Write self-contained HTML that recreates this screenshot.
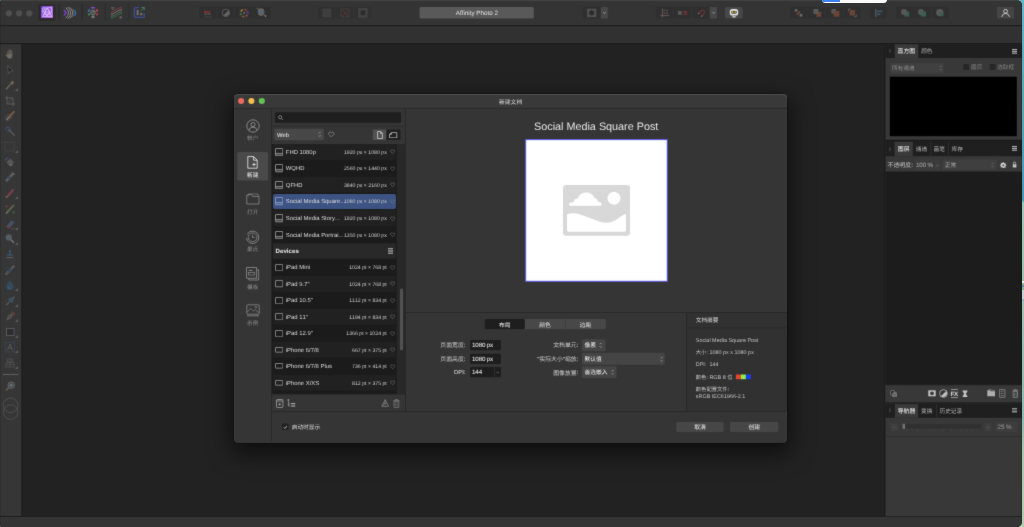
<!DOCTYPE html>
<html><head><meta charset="utf-8"><title>Affinity Photo 2</title>
<style>
html,body{margin:0;padding:0}
body{width:1024px;height:527px;position:relative;overflow:hidden;background:#6db6c0;font-family:"Liberation Sans",sans-serif;text-rendering:geometricPrecision;font-kerning:none}
.t{position:absolute;white-space:pre;display:block;height:0}
#win{position:absolute;left:0;top:0;width:1021.5px;height:527px;border-radius:2px 5.5px 5.5px 2px;overflow:hidden;background:#222}
#inner{position:absolute;left:0;top:0;width:1021.5px;height:527px;background:#222;will-change:transform;filter:url(#soft)}
</style></head><body>
<svg width="0" height="0" style="position:absolute"><defs><filter id="soft" x="0" y="0" width="100%" height="100%" color-interpolation-filters="sRGB"><feConvolveMatrix order="3" kernelMatrix="0.02 0.13 0.02 0.13 1 0.13 0.02 0.13 0.02" divisor="1.6" edgeMode="duplicate" preserveAlpha="true"/></filter></defs></svg>
<div style="position:absolute;left:1018px;top:0;width:6px;height:527px;background:linear-gradient(180deg,#63b7c9 0px,#5ba5b4 110px,#4a9ab8 200px,#9cc8b8 203px,#9cc4b0 281px,#e8f0e8 281.5px,#e8f0e8 282.5px,#8ab890 283px,#8ab890 285px,#5a78d0 286px,#8ab890 287.5px,#8ab890 290px,#c8d2d0 290.5px,#c8d2d0 299px,#9ab0c8 299.5px,#9ab0c8 300.5px,#a0c4b4 301.5px,#8cbcb0 420px,#a8c8b0 450px,#b4ccb0 527px)"></div>
<div id="win"><div id="inner">
<svg style="position:absolute;left:-1px;top:-1px" width="1024" height="28"><rect x="1.00" y="1.00" width="1022.00" height="25.30" fill="#343434"/></svg>
<div style="position:absolute;left:0.00px;top:0.00px;width:1022.00px;height:1.00px;background:#4b4b4b;"></div>
<svg style="position:absolute;left:-1px;top:24px" width="1024" height="4"><rect x="1.00" y="1.00" width="1022.00" height="1.20" fill="#1e1e1e"/></svg>
<svg style="position:absolute;left:-1px;top:25px" width="1024" height="20"><rect x="1.00" y="1.20" width="1022.00" height="17.00" fill="#313131"/></svg>
<svg style="position:absolute;left:-1px;top:42px" width="1024" height="4"><rect x="1.00" y="1.00" width="1022.00" height="1.20" fill="#1b1b1b"/></svg>
<svg style="position:absolute;left:-1px;top:43px" width="1024" height="476"><rect x="1.00" y="1.20" width="1022.00" height="473.00" fill="#222222"/></svg>
<svg style="position:absolute;left:-1px;top:43px" width="24" height="476"><rect x="1.00" y="1.20" width="21.50" height="473.00" fill="#363636"/></svg>
<svg style="position:absolute;left:20px;top:43px" width="4" height="476"><rect x="1.50" y="1.20" width="1.00" height="473.00" fill="#1c1c1c"/></svg>
<svg style="position:absolute;left:-1px;top:515px" width="1024" height="14"><rect x="1.00" y="1.50" width="1022.00" height="11.00" fill="#343434"/></svg>
<div style="position:absolute;left:0.00px;top:516.00px;width:1022.00px;height:1.00px;background:#1e1e1e;"></div>
<svg style="position:absolute;left:883px;top:43px" width="140" height="475"><rect x="1.00" y="1.20" width="138.00" height="472.00" fill="#383838"/></svg>
<svg style="position:absolute;left:883px;top:43px" width="4" height="475"><rect x="1.00" y="1.20" width="1.40" height="472.00" fill="#1b1b1b"/></svg>
<svg style="position:absolute;left:4px;top:9px" width="9" height="9"><rect x="1.80" y="1.20" width="6.20" height="6.20" rx="3.10" fill="#4f4f4f"/></svg>
<svg style="position:absolute;left:15px;top:9px" width="9" height="9"><rect x="1.00" y="1.20" width="6.20" height="6.20" rx="3.10" fill="#4f4f4f"/></svg>
<svg style="position:absolute;left:25px;top:9px" width="9" height="9"><rect x="1.20" y="1.20" width="6.20" height="6.20" rx="3.10" fill="#4f4f4f"/></svg>
<svg style="position:absolute;left:37px;top:3px" width="20" height="19"><rect x="1.30" y="1.30" width="17.00" height="16.40" rx="1.50" fill="#2a2a2a"/></svg>
<svg style="position:absolute;left:40.70px;top:6.30px;" width="12.4" height="12" viewBox="0 0 12.4 12"><defs><linearGradient id="pp" x1="0" y1="0" x2="1" y2="1"><stop offset="0" stop-color="#6a46dc"/><stop offset=".55" stop-color="#a05ce4"/><stop offset="1" stop-color="#c874ea"/></linearGradient></defs>
<rect width="12.4" height="12" rx=".8" fill="url(#pp)"/>
<g stroke="#efe0ff" stroke-width=".8" fill="none" opacity=".8"><path d="M1.6 10.4 L6.2 1.6 L10.8 10.4 Z"/><path d="M3.9 6 H8.5 M2.8 8.2 H9.6 M6.2 1.6 L3.9 6 L6.2 10.4 L8.5 6 Z M3.9 6 L2.8 8.2 M8.5 6 L9.6 8.2"/><path d="M7.4 1.6 L10.6 1.6 L10.6 7 M1.8 1.8 L4.4 1.8 L1.8 6.4Z"/></g></svg>
<svg style="position:absolute;left:57px;top:2px" width="4" height="20"><rect x="1.40" y="1.50" width="1.00" height="17.00" fill="#2a2a2a"/></svg>
<svg style="position:absolute;left:80px;top:2px" width="4" height="20"><rect x="1.60" y="1.50" width="1.00" height="17.00" fill="#2a2a2a"/></svg>
<svg style="position:absolute;left:103px;top:2px" width="4" height="20"><rect x="1.80" y="1.50" width="1.00" height="17.00" fill="#2a2a2a"/></svg>
<svg style="position:absolute;left:127px;top:2px" width="4" height="20"><rect x="1.50" y="1.50" width="1.00" height="17.00" fill="#2a2a2a"/></svg>
<svg style="position:absolute;left:63.20px;top:5.60px;" width="14" height="14" viewBox="0 0 14 14"><g fill="none" stroke-linecap="round"><path d="M1.4 4.6 L3.2 6.8 L1.4 9" stroke="#7a40c4" stroke-width="1.6"/>
<path d="M3 1.8 Q8.4 6.8 3 11.8" stroke="#8e8e8e" stroke-width=".95"/><path d="M5 1.2 Q10.6 6.8 5 12.4" stroke="#8e8e8e" stroke-width=".95"/><path d="M7.2 1.6 Q12.4 6.8 7.2 12" stroke="#8a8a8a" stroke-width=".95"/><path d="M9.6 3 Q12.8 6.8 9.6 10.6" stroke="#6c6c6c" stroke-width=".8"/>
<path d="M11.9 4.2 Q13.3 6.8 11.9 9.4" stroke="#3b74b0" stroke-width="1.1"/></g></svg>
<svg style="position:absolute;left:86.40px;top:5.60px;" width="14" height="14" viewBox="0 0 14 14"><g fill="none" stroke-width="1.7"><path d="M2.5 6 A4.6 4.6 0 0 1 3.7 3.3" stroke="#3a70ac"/><path d="M5.1 2.1 A4.6 4.6 0 0 1 8.9 2.1" stroke="#8c48c0"/><path d="M10.3 3.3 A4.6 4.6 0 0 1 11.5 5.9" stroke="#b44460"/><path d="M11.5 7.4 A4.6 4.6 0 0 1 10.5 9.4" stroke="#ac4444"/><path d="M2.5 7.4 A4.6 4.6 0 0 0 3.5 9.4" stroke="#38905e"/></g>
<circle cx="7" cy="6.5" r="2.4" fill="#4a4a4a" stroke="#7a7a7a" stroke-width=".9"/><path d="M7 6.5 L8.1 5.2" stroke="#aaa" stroke-width=".8"/><rect x="5.6" y="9.7" width="2.8" height="2.4" fill="#7a7a7a"/></svg>
<svg style="position:absolute;left:110.00px;top:6.00px;" width="13" height="13" viewBox="0 0 13 13"><g fill="none" stroke-width=".9"><path d="M1 6.2 C4 6.2 5 1.8 12 1.6" stroke="#8a3c3c"/><path d="M1 8.3 C4 8.3 6 4 12 3.8" stroke="#808080"/><path d="M1 10.4 C4 10.4 6 6.2 12 6" stroke="#808080" opacity=".7"/><path d="M1 12.2 C5 12.2 7 8 12 7.6" stroke="#2f7444"/></g><rect x="1.2" y="1.4" width="3.2" height="1" fill="#6e6e6e"/><rect x="1.8" y="3.2" width="2" height=".8" fill="#606060"/><rect x="9.4" y="10.2" width="2.6" height="2.4" fill="#5a5a5a"/></svg>
<svg style="position:absolute;left:133.00px;top:6.00px;" width="13" height="13" viewBox="0 0 13 13"><path d="M6 1.6 H2.6 Q1.4 1.6 1.4 2.8 V10.2 Q1.4 11.4 2.6 11.4 H10 Q11.2 11.4 11.2 10.2 V7" fill="none" stroke="#414a94" stroke-width="1.4"/><rect x="3.6" y="3.8" width="2" height="5.4" fill="#707070"/><rect x="7" y="7" width="2.4" height="2.2" fill="#707070"/><path d="M7.6 5 L11.2 1.6 M8.6 1.5 H11.3 V4.2" fill="none" stroke="#347e64" stroke-width="1"/></svg>
<svg style="position:absolute;left:198px;top:5px" width="20" height="15"><rect x="1.30" y="1.90" width="17.00" height="11.70" rx="1.20" fill="#2f2f2f"/></svg>
<svg style="position:absolute;left:216px;top:5px" width="20" height="15"><rect x="1.30" y="1.90" width="17.00" height="11.70" rx="1.20" fill="#2f2f2f"/></svg>
<svg style="position:absolute;left:234px;top:5px" width="20" height="15"><rect x="1.20" y="1.90" width="17.00" height="11.70" rx="1.20" fill="#2f2f2f"/></svg>
<svg style="position:absolute;left:252px;top:5px" width="20" height="15"><rect x="1.30" y="1.90" width="17.00" height="11.70" rx="1.20" fill="#2f2f2f"/></svg>
<svg style="position:absolute;left:203.30px;top:7.80px;opacity:.6;" width="10" height="10" viewBox="0 0 10 10"><path d="M0.8 5.4 L1.4 1.2 L2.6 3.6 L4 2.6 L5.2 3.8 L6.6 2.4 L8 5.4 Z" fill="#a43434"/><path d="M0.8 6.8 L2.6 5.6 L4.4 6.4 L6.4 5.4 L8.2 6.8 Z" fill="#6aa89c" opacity=".75"/><path d="M0.8 9 H8.8" stroke="#5c5c5c" stroke-width="1.1" stroke-dasharray="1.2 .5"/></svg>
<svg style="position:absolute;left:221.00px;top:8.00px;" width="10" height="10" viewBox="0 0 10 10"><circle cx="4.9" cy="4.8" r="3.7" fill="none" stroke="#5c5c5c" stroke-width=".9"/><path d="M2.3 7.4 A3.7 3.7 0 0 0 7.5 2.2 Z" fill="#636363"/></svg>
<svg style="position:absolute;left:238.60px;top:7.60px;opacity:.52;" width="10.4" height="10.4" viewBox="0 0 10.4 10.4"><g stroke-width="2" fill="none"><path d="M5.2 1.4 A3.6 3.6 0 0 1 7.7 2.5" stroke="#c04a4a"/><path d="M8.2 3.3 A3.6 3.6 0 0 1 8.7 5.6" stroke="#8a55c8"/><path d="M8.5 6.6 A3.6 3.6 0 0 1 6.6 8.4" stroke="#c05a8a"/><path d="M5.5 8.8 A3.6 3.6 0 0 1 3 8" stroke="#c87838"/><path d="M2.3 7.2 A3.6 3.6 0 0 1 1.6 5" stroke="#4a9a58"/><path d="M1.8 3.9 A3.6 3.6 0 0 1 4 1.6" stroke="#c8a838"/></g><circle cx="5.2" cy="5.1" r="1" fill="#aaa"/></svg>
<svg style="position:absolute;left:256.40px;top:7.40px;opacity:.58;" width="12" height="11" viewBox="0 0 12 11"><circle cx="5" cy="5" r="3.4" fill="#6a8ab0"/><path d="M2.4 3.2 A3.4 3.4 0 0 1 7.6 3.2" fill="none" stroke="#d08a48" stroke-width="1.2" opacity=".8"/><path d="M2.6 7 A3.4 3.4 0 0 0 7 7.6" fill="none" stroke="#d08a48" stroke-width="1.2" opacity=".8"/><path d="M1 1 L9.8 9.6" stroke="#999" stroke-width="1.3" stroke-dasharray="1 .6"/><path d="M8.4 8 L10.6 8.6 L9.6 10.6 Z" fill="#aaa"/></svg>
<svg style="position:absolute;left:317px;top:5px" width="19" height="15"><rect x="1.00" y="1.90" width="17.00" height="11.70" rx="1.20" fill="#303030"/></svg>
<svg style="position:absolute;left:334px;top:5px" width="20" height="15"><rect x="1.90" y="1.90" width="17.00" height="11.70" rx="1.20" fill="#303030"/></svg>
<svg style="position:absolute;left:353px;top:5px" width="20" height="15"><rect x="1.40" y="1.90" width="17.00" height="11.70" rx="1.20" fill="#303030"/></svg>
<svg style="position:absolute;left:321.60px;top:7.90px;" width="10" height="10" viewBox="0 0 10 10"><rect x=".9" y=".9" width="8" height="8" fill="#3e3e3e" stroke="#4c4c4c" stroke-width=".8" stroke-dasharray="1 .9"/></svg>
<svg style="position:absolute;left:339.60px;top:7.90px;" width="10" height="10" viewBox="0 0 10 10"><rect x=".9" y=".9" width="8" height="8" fill="none" stroke="#555" stroke-width=".8" stroke-dasharray="1 .9"/><path d="M1.8 1.8 L8 8 M8 1.8 L1.8 8" stroke="#6e2e32" stroke-width=".9"/></svg>
<svg style="position:absolute;left:358.00px;top:7.90px;" width="10" height="10" viewBox="0 0 10 10"><rect x=".4" y=".4" width="9" height="9" fill="#424242" stroke="#4c4c4c" stroke-width=".8" stroke-dasharray="1 .9"/><rect x="2.6" y="2.6" width="4.6" height="4.6" rx="1" fill="#2c2c2c"/></svg>
<svg style="position:absolute;left:418px;top:6px" width="117" height="14"><rect x="1.50" y="1.00" width="114.30" height="11.50" rx="1.50" fill="#595959"/></svg>
<span class="t" style="left:455.71px;top:10px;line-height:8px;font-size:6.30px;color:#dcdcdc;-webkit-text-stroke:0.05px;">Affinity Photo 2</span>
<svg style="position:absolute;left:582px;top:5px" width="19" height="15"><rect x="1.20" y="1.90" width="16.60" height="11.70" rx="1.20" fill="#2f2f2f"/></svg>
<svg style="position:absolute;left:586px;top:7px" width="12" height="12"><rect x="1.10" y="1.70" width="9.20" height="8.40" fill="#525252"/></svg>
<svg style="position:absolute;left:588px;top:9px" width="8" height="8"><rect x="1.00" y="1.20" width="5.20" height="5.20" rx="2.60" fill="#2b2b2b"/></svg>
<svg style="position:absolute;left:600px;top:5px" width="9" height="15"><rect x="1.00" y="1.90" width="6.90" height="11.70" rx="1.20" fill="#484848"/></svg>
<svg style="position:absolute;left:601.00px;top:6.90px;" width="6.9" height="11.7" viewBox="0 0 6.9 11.7"><path d="M2.2 5.2 L3.45 6.5 L4.7 5.2" fill="none" stroke="#b4b4b4" stroke-width=".75"/></svg>
<svg style="position:absolute;left:654px;top:5px" width="20" height="15"><rect x="1.90" y="1.90" width="17.00" height="11.70" rx="1.20" fill="#2f2f2f"/></svg>
<svg style="position:absolute;left:672px;top:5px" width="20" height="15"><rect x="1.90" y="1.90" width="17.00" height="11.70" rx="1.20" fill="#2f2f2f"/></svg>
<svg style="position:absolute;left:691px;top:5px" width="19" height="15"><rect x="1.00" y="1.90" width="17.00" height="11.70" rx="1.20" fill="#2f2f2f"/></svg>
<svg style="position:absolute;left:659.80px;top:7.60px;" width="10" height="10" viewBox="0 0 10 10"><path d="M2.4 .6 V9.6 M.4 7.6 H9" stroke="#6e6e6e" stroke-width=".7"/><rect x="3.6" y="1.6" width="1.6" height="1.6" fill="#555"/><rect x="6.2" y="1.6" width="1.6" height="1.6" fill="#555"/><rect x="3.6" y="4.4" width="1.8" height="1.8" fill="#8a3034"/><rect x="6.2" y="4.4" width="1.6" height="1.6" fill="#555"/></svg>
<svg style="position:absolute;left:677.00px;top:8.00px;" width="12" height="10" viewBox="0 0 12 10"><rect x="1" y="3" width="3.8" height="3.8" fill="#585858"/><path d="M5.8 3 H9.8 V6.8 H5.8 V5.8 H8 V4 H5.8 Z" fill="#7c3034"/></svg>
<svg style="position:absolute;left:695.00px;top:7.00px;" width="12" height="12" viewBox="0 0 12 12"><path d="M3.8 6.4 L6 4 A2 2 0 0 1 8.9 6.8 L6.8 9.1" fill="none" stroke="#7c3034" stroke-width="1.1"/><path d="M3.2 7 L4.1 6" stroke="#777" stroke-width="1.2"/><path d="M6.2 9.7 L7.1 8.7" stroke="#777" stroke-width="1.2"/></svg>
<svg style="position:absolute;left:708px;top:5px" width="10" height="15"><rect x="1.80" y="1.90" width="7.20" height="11.70" rx="1.20" fill="#484848"/></svg>
<svg style="position:absolute;left:709.80px;top:6.90px;" width="7.2" height="11.7" viewBox="0 0 7.2 11.7"><path d="M2.3 5.2 L3.6 6.5 L4.9 5.2" fill="none" stroke="#b4b4b4" stroke-width=".75"/></svg>
<svg style="position:absolute;left:724px;top:5px" width="20" height="15"><rect x="1.00" y="1.90" width="17.60" height="11.70" rx="1.50" fill="#474747"/></svg>
<svg style="position:absolute;left:728.80px;top:7.60px;" width="10" height="10.4" viewBox="0 0 10 10.4"><rect x=".8" y="1" width="8.4" height="6.6" rx="2.6" fill="#e8e8e8"/><rect x="2.3" y="2.7" width="5.4" height="3" rx=".8" fill="#3a3a3a"/><rect x="3" y="3.3" width="1.3" height="1.6" fill="#e6c53a"/><rect x="5.6" y="3.3" width="1.3" height="1.6" fill="#e6c53a"/><path d="M3 8.2 H7 L6.4 9.4 H3.6 Z" fill="#ddd"/></svg>
<svg style="position:absolute;left:789px;top:5px" width="20" height="15"><rect x="1.30" y="1.90" width="17.00" height="11.70" rx="1.20" fill="#2f2f2f"/></svg>
<svg style="position:absolute;left:807px;top:5px" width="20" height="15"><rect x="1.10" y="1.90" width="17.00" height="11.70" rx="1.20" fill="#2f2f2f"/></svg>
<svg style="position:absolute;left:825px;top:5px" width="20" height="15"><rect x="1.10" y="1.90" width="17.00" height="11.70" rx="1.20" fill="#2f2f2f"/></svg>
<svg style="position:absolute;left:843px;top:5px" width="19" height="15"><rect x="1.00" y="1.90" width="17.00" height="11.70" rx="1.20" fill="#2f2f2f"/></svg>
<svg style="position:absolute;left:794.00px;top:7.60px;" width="10" height="10" viewBox="0 0 10 10"><rect x=".8" y="1" width="2.6" height="2.6" fill="#666"/><rect x="5.6" y="5.8" width="2.8" height="2.8" fill="#666"/><path d="M2.2 6 L5.2 2.6 L6.6 4 L3.6 7.4 Z" fill="#6c4338"/></svg>
<svg style="position:absolute;left:811.50px;top:7.60px;" width="11" height="10" viewBox="0 0 11 10"><rect x="4.4" y="3.8" width="4.8" height="5" fill="#6c4338"/><rect x="1.4" y="1" width="5" height="5" fill="#585858"/></svg>
<svg style="position:absolute;left:829.50px;top:7.60px;" width="11" height="10" viewBox="0 0 11 10"><rect x="1.4" y="1" width="4.6" height="4.6" fill="#585858"/><rect x="3.6" y="3" width="5.8" height="5.8" fill="#6c4338"/></svg>
<svg style="position:absolute;left:847.20px;top:7.60px;" width="11" height="10" viewBox="0 0 11 10"><path d="M1.4 3.4 V1 H3.8" fill="none" stroke="#666" stroke-width=".8"/><path d="M9.2 6.4 V8.8 H6.8" fill="none" stroke="#666" stroke-width=".8"/><rect x="2.6" y="2" width="5.4" height="5.4" rx=".5" fill="#6c4338"/></svg>
<svg style="position:absolute;left:869px;top:5px" width="19" height="15"><rect x="1.00" y="1.90" width="17.00" height="11.70" rx="1.20" fill="#2f2f2f"/></svg>
<svg style="position:absolute;left:873.50px;top:7.60px;" width="10" height="10" viewBox="0 0 10 10"><path d="M1.8 .8 V9" stroke="#777" stroke-width=".7"/><rect x="2.6" y="2.4" width="5.8" height="1.8" fill="#3a566e"/><rect x="2.6" y="5.4" width="3.8" height="1.8" fill="#3a566e"/></svg>
<svg style="position:absolute;left:895px;top:5px" width="19" height="15"><rect x="1.10" y="1.90" width="16.80" height="11.70" rx="1.20" fill="#2f2f2f"/></svg>
<svg style="position:absolute;left:912px;top:5px" width="20" height="15"><rect x="1.90" y="1.90" width="16.80" height="11.70" rx="1.20" fill="#2f2f2f"/></svg>
<svg style="position:absolute;left:931px;top:5px" width="19" height="15"><rect x="1.00" y="1.90" width="16.80" height="11.70" rx="1.20" fill="#2f2f2f"/></svg>
<svg style="position:absolute;left:899.50px;top:7.60px;" width="11" height="10" viewBox="0 0 11 10"><rect x="4.4" y="3.6" width="4.8" height="5" fill="#3a5e50"/><circle cx="4" cy="4" r="3" fill="#585858"/></svg>
<svg style="position:absolute;left:917.30px;top:7.60px;" width="11" height="10" viewBox="0 0 11 10"><circle cx="4" cy="4" r="3" fill="#585858"/><rect x="3.8" y="3.4" width="5.2" height="5.2" fill="#3a5e50"/></svg>
<svg style="position:absolute;left:935.40px;top:7.60px;" width="11" height="10" viewBox="0 0 11 10"><circle cx="4.8" cy="4.6" r="3.7" fill="#585858"/><rect x="4.8" y="4.8" width="3.6" height="3.4" fill="#3a5e50"/></svg>
<svg style="position:absolute;left:996px;top:6px" width="19" height="14"><rect x="1.00" y="1.00" width="17.00" height="11.60" rx="1.20" fill="#454545"/></svg>
<svg style="position:absolute;left:1001.00px;top:7.80px;" width="9" height="10" viewBox="0 0 9 10"><circle cx="4.6" cy="3.3" r="1.9" fill="none" stroke="#e4e4e4" stroke-width=".8"/><path d="M.7 8.9 Q1.6 5.4 4.6 5.3 Q7.6 5.4 8.5 8.9" fill="none" stroke="#e4e4e4" stroke-width=".8"/></svg>
<svg style="position:absolute;left:4.20px;top:48.40px;opacity:0.7;" width="12" height="12" viewBox="0 0 12 12"><path d="M3.3 7 V3.6 Q3.3 2.9 3.9 2.9 Q4.5 2.9 4.5 3.6 V6 V2.4 Q4.5 1.7 5.15 1.7 Q5.8 1.7 5.8 2.4 V6 V2 Q5.8 1.3 6.45 1.3 Q7.1 1.3 7.1 2 V6 V3 Q7.1 2.4 7.75 2.4 Q8.4 2.4 8.4 3 V7.8 Q8.4 10.9 5.9 10.9 Q4.2 10.9 3 9.2 L1.7 7 Q1.4 6.3 2 6 Q2.7 5.8 3.3 7Z" fill="#8a8074" stroke="#363636" stroke-width=".25"/></svg>
<svg style="position:absolute;left:4.20px;top:63.60px;opacity:0.75;" width="12" height="12" viewBox="0 0 12 12"><path d="M3.6 1.4 L9.2 7.2 L6.2 7.2 L4.4 9.8 Z" fill="#1e1e1e" stroke="#6a6a6a" stroke-width=".7"/></svg>
<svg style="position:absolute;left:4.20px;top:78.80px;opacity:0.7;" width="12" height="12" viewBox="0 0 12 12"><path d="M2 10.4 L6.4 5.4" stroke="#8a8a7a" stroke-width="1.2"/><path d="M6 4.2 L8 6.2 L9.6 4.6 Q10.6 3.2 9.4 2.2 Q8.2 1.4 7.4 2.6 Z" fill="#8a7a60"/></svg>
<svg style="position:absolute;left:14.60px;top:88.00px;" width="3" height="3" viewBox="0 0 3 3"><path d="M3 0 V3 H0 Z" fill="#5c5c5c"/></svg>
<svg style="position:absolute;left:4.20px;top:94.50px;opacity:0.6;" width="12" height="12" viewBox="0 0 12 12"><path d="M3 .8 V9 H11.2 M.8 3 H9 V11.2" fill="none" stroke="#808080" stroke-width=".8"/><path d="M3 9 L9 3" stroke="#707070" stroke-width=".7"/></svg>
<svg style="position:absolute;left:4.20px;top:109.90px;opacity:0.7;" width="12" height="12" viewBox="0 0 12 12"><path d="M4.6 7.6 L9.8 1.8" stroke="#a06a44" stroke-width="1.8" stroke-linecap="round"/><ellipse cx="4.4" cy="7.6" rx="3.2" ry="2.4" fill="none" stroke="#888" stroke-width=".7" stroke-dasharray="1 .7" transform="rotate(-40 4.4 7.6)"/><path d="M2.6 9.8 L5 7.2" stroke="#999" stroke-width="1.4"/></svg>
<svg style="position:absolute;left:4.20px;top:125.10px;opacity:0.7;" width="12" height="12" viewBox="0 0 12 12"><path d="M4.4 4.4 L10.6 10.6" stroke="#777" stroke-width="1.2"/><path d="M3.8 1 V3 M3.8 5.4 V7.2 M.8 4 H2.8 M5 4 H7 M1.8 2 L2.8 3 M5.8 2 L4.8 3" stroke="#4a5ab0" stroke-width=".9"/></svg>
<svg style="position:absolute;left:4.20px;top:141.00px;opacity:0.5;" width="12" height="12" viewBox="0 0 12 12"><rect x="1" y="1.2" width="9.2" height="8.8" fill="none" stroke="#6a6a6a" stroke-width=".8" stroke-dasharray="1.2 1"/></svg>
<svg style="position:absolute;left:14.60px;top:150.20px;" width="3" height="3" viewBox="0 0 3 3"><path d="M3 0 V3 H0 Z" fill="#5c5c5c"/></svg>
<svg style="position:absolute;left:4.20px;top:156.20px;opacity:0.5;" width="12" height="12" viewBox="0 0 12 12"><path d="M2.4 6.4 L6.2 2.4 L10 6.2 L6.4 10 Z" fill="#777"/><path d="M2 5.4 Q1.2 2.6 4.4 1.6" fill="none" stroke="#3e6ea8" stroke-width="1.2"/><path d="M4 8.2 H9.4 L6.8 10.6Z" fill="#999"/></svg>
<svg style="position:absolute;left:4.20px;top:171.40px;opacity:0.5;" width="12" height="12" viewBox="0 0 12 12"><path d="M2 10.2 L9.6 2.2" stroke="#8a8a7a" stroke-width="2.6"/><path d="M4.2 8 L6.4 5.6" stroke="#3e5a9a" stroke-width="2.6"/><path d="M8.2 1.4 L10.8 3.6" stroke="#999" stroke-width="1"/></svg>
<svg style="position:absolute;left:4.20px;top:187.20px;opacity:0.6;" width="12" height="12" viewBox="0 0 12 12"><path d="M2.4 10 Q3.6 9.8 4.4 8.4" stroke="#a0705a" stroke-width="1.8" stroke-linecap="round" fill="none"/><path d="M5 7.6 L8.8 3.2" stroke="#a04450" stroke-width="2.4" stroke-linecap="round"/></svg>
<svg style="position:absolute;left:14.60px;top:196.40px;" width="3" height="3" viewBox="0 0 3 3"><path d="M3 0 V3 H0 Z" fill="#5c5c5c"/></svg>
<svg style="position:absolute;left:4.20px;top:202.50px;opacity:0.5;" width="12" height="12" viewBox="0 0 12 12"><path d="M3 9.6 L9.4 2.6" stroke="#7a8a5a" stroke-width="2.2" stroke-linecap="round"/><circle cx="2.6" cy="3.4" r="1.1" fill="#b04040"/><circle cx="9.6" cy="9.4" r="1.1" fill="#3a9a5a"/><path d="M2 10.6 L3.6 8.8" stroke="#aaa" stroke-width="1.2"/></svg>
<svg style="position:absolute;left:4.20px;top:218.00px;opacity:0.5;" width="12" height="12" viewBox="0 0 12 12"><path d="M3.4 7 L7.6 2.2 L10.4 4.6 L6.2 9.4 Z" fill="#5a6a9a"/><path d="M3.4 7 L6.2 9.4 L4.8 10.8 L2 8.6Z" fill="#a05050"/><path d="M7 10.8 H10.6" stroke="#777" stroke-width=".8"/></svg>
<svg style="position:absolute;left:14.60px;top:227.20px;" width="3" height="3" viewBox="0 0 3 3"><path d="M3 0 V3 H0 Z" fill="#5c5c5c"/></svg>
<svg style="position:absolute;left:4.20px;top:233.20px;opacity:0.6;" width="12" height="12" viewBox="0 0 12 12"><circle cx="4.8" cy="4.4" r="3.1" fill="#6a7886"/><path d="M6.8 6.6 L10 9.8" stroke="#8a949e" stroke-width="1.7"/></svg>
<svg style="position:absolute;left:14.60px;top:242.40px;" width="3" height="3" viewBox="0 0 3 3"><path d="M3 0 V3 H0 Z" fill="#5c5c5c"/></svg>
<svg style="position:absolute;left:4.20px;top:248.40px;opacity:0.55;" width="12" height="12" viewBox="0 0 12 12"><path d="M5 2 H7 V3.6 L6.6 6.2 H8.8 V7.8 H3.2 V6.2 H5.4 L5 3.6Z" fill="#3e6a9a"/><path d="M2.6 9.6 H9.4" stroke="#7a8896" stroke-width="1"/></svg>
<svg style="position:absolute;left:4.20px;top:263.60px;opacity:0.5;" width="12" height="12" viewBox="0 0 12 12"><path d="M2.4 9.8 L9.6 2.4" stroke="#777" stroke-width="2.6" stroke-linecap="round"/><path d="M4.6 7.6 L7.4 4.6" stroke="#3a5a8a" stroke-width="2.6"/><path d="M1.6 5.4 A2.6 2.6 0 0 1 5 3 M2.2 8 A2.6 2.6 0 0 0 5 8.6" fill="none" stroke="#3a5a8a" stroke-width=".7"/></svg>
<svg style="position:absolute;left:4.20px;top:278.80px;opacity:0.5;" width="12" height="12" viewBox="0 0 12 12"><path d="M6 1.2 Q9.6 5.6 9.6 7.6 A3.6 3.6 0 0 1 2.4 7.6 Q2.4 5.6 6 1.2Z" fill="#2e5f86"/><path d="M4 7.6 A2 2 0 0 0 6 9.6" stroke="#6a9ac0" stroke-width=".7" fill="none"/></svg>
<svg style="position:absolute;left:14.60px;top:288.00px;" width="3" height="3" viewBox="0 0 3 3"><path d="M3 0 V3 H0 Z" fill="#5c5c5c"/></svg>
<svg style="position:absolute;left:4.20px;top:294.50px;opacity:0.45;" width="12" height="12" viewBox="0 0 12 12"><path d="M2 10.4 L5 7.4" stroke="#8a8a7a" stroke-width="1.2"/><circle cx="7" cy="5" r="2.6" fill="#3f6f9a"/><path d="M8.6 3.4 L10.4 1.6" stroke="#999" stroke-width="1.3"/><path d="M1.4 6.4 L2.4 7.4 M2 4.4 L2.6 5" stroke="#a05a3a" stroke-width=".9"/></svg>
<svg style="position:absolute;left:14.60px;top:303.70px;" width="3" height="3" viewBox="0 0 3 3"><path d="M3 0 V3 H0 Z" fill="#5c5c5c"/></svg>
<svg style="position:absolute;left:4.20px;top:309.90px;opacity:0.5;" width="12" height="12" viewBox="0 0 12 12"><path d="M2 10.4 L4.2 5.2 L7.6 3.4 L9 4.8 L7.2 8.2 Z" fill="#777"/><path d="M7.6 1.8 L10.6 4.8" stroke="#a04a3a" stroke-width="1.8"/><circle cx="5.6" cy="6.8" r=".8" fill="#333"/></svg>
<svg style="position:absolute;left:14.60px;top:319.10px;" width="3" height="3" viewBox="0 0 3 3"><path d="M3 0 V3 H0 Z" fill="#5c5c5c"/></svg>
<svg style="position:absolute;left:4.20px;top:325.60px;opacity:0.42;" width="12" height="12" viewBox="0 0 12 12"><rect x="2.4" y="2.6" width="7.6" height="7" fill="#1c2424" stroke="#9a9a9a" stroke-width=".8"/></svg>
<svg style="position:absolute;left:14.60px;top:334.80px;" width="3" height="3" viewBox="0 0 3 3"><path d="M3 0 V3 H0 Z" fill="#5c5c5c"/></svg>
<svg style="position:absolute;left:4.20px;top:341.00px;opacity:0.42;" width="12" height="12" viewBox="0 0 12 12"><rect x="1.4" y="1.4" width="9.2" height="9.4" fill="none" stroke="#3a5a8a" stroke-width=".8"/><path d="M3.6 9 L6 3 L8.4 9 M4.4 7.2 H7.6" fill="none" stroke="#8a8a8a" stroke-width=".9"/></svg>
<svg style="position:absolute;left:14.60px;top:350.20px;" width="3" height="3" viewBox="0 0 3 3"><path d="M3 0 V3 H0 Z" fill="#5c5c5c"/></svg>
<svg style="position:absolute;left:4.20px;top:357.20px;opacity:0.42;" width="12" height="12" viewBox="0 0 12 12"><path d="M3.6 2 H8.4 L9 5 H3 Z M2.4 5.4 H9.6 L10.4 10 H1.6 Z" fill="none" stroke="#777" stroke-width=".8"/><path d="M6 2 V10 M2 7.6 H10" stroke="#777" stroke-width=".7"/></svg>
<svg style="position:absolute;left:14.60px;top:366.40px;" width="3" height="3" viewBox="0 0 3 3"><path d="M3 0 V3 H0 Z" fill="#5c5c5c"/></svg>
<svg style="position:absolute;left:2px;top:373px" width="18" height="3"><rect x="1.00" y="1.00" width="15.50" height="0.80" fill="#6a6a6a"/></svg>
<svg style="position:absolute;left:4.40px;top:379.80px;opacity:.75;" width="12.6" height="12.6" viewBox="0 0 12.6 12.6"><circle cx="7.2" cy="5.2" r="3.2" fill="#4a4a4a" stroke="#7a7a7a" stroke-width=".9"/><circle cx="7.2" cy="5.2" r="1.6" fill="#6e8296"/><path d="M4.8 7.6 L1.8 10.6" stroke="#7a6a5a" stroke-width="1.5"/></svg>
<svg style="position:absolute;left:2.00px;top:396.00px;" width="18" height="26" viewBox="0 0 18 26"><circle cx="8.6" cy="9.3" r="7.3" fill="none" stroke="#585858" stroke-width=".7"/><circle cx="8.6" cy="16.1" r="7.3" fill="none" stroke="#585858" stroke-width=".7"/></svg>
<svg style="position:absolute;left:884px;top:43px" width="139" height="16"><rect x="1.40" y="1.20" width="136.60" height="13.80" fill="#1f1f1f"/></svg>
<svg style="position:absolute;left:888.80px;top:49.10px;" width="2" height="4.4" viewBox="0 0 2 4.4"><path d="M1 .2 V4.2" stroke="#4e4e4e" stroke-width="1"/></svg>
<svg style="position:absolute;left:893px;top:43px" width="27" height="16"><rect x="1.70" y="1.20" width="23.50" height="13.80" fill="#3a3a3a"/></svg>


<svg style="position:absolute;left:1012.20px;top:48.90px;" width="5" height="5" viewBox="0 0 5 5"><path d="M0 .6 H5 M0 2.4 H5 M0 4.2 H5" stroke="#d8d8d8" stroke-width=".9"/></svg>
<svg style="position:absolute;left:889px;top:62px" width="56" height="13"><rect x="1.20" y="1.20" width="53.50" height="10.00" rx="1.20" fill="#404040"/></svg>

<svg style="position:absolute;left:938.80px;top:65.20px;" width="3.4" height="6" viewBox="0 0 3.4 6"><path d="M.5 2.2 L1.7 .9 L2.9 2.2 M.5 3.8 L1.7 5.1 L2.9 3.8" fill="none" stroke="#777" stroke-width=".6"/></svg>
<svg style="position:absolute;left:962px;top:62px" width="9" height="9"><rect x="1.30" y="1.90" width="5.80" height="6.10" rx="1.20" fill="#262626"/></svg>

<svg style="position:absolute;left:988px;top:62px" width="9" height="9"><rect x="1.60" y="1.90" width="5.80" height="6.10" rx="1.20" fill="#262626"/></svg>

<svg style="position:absolute;left:888px;top:75px" width="130" height="63"><rect x="1.80" y="1.70" width="127.00" height="59.50" fill="#000"/></svg>
<svg style="position:absolute;left:884px;top:138px" width="139" height="4"><rect x="1.40" y="1.80" width="136.60" height="1.20" fill="#1a1a1a"/></svg>
<svg style="position:absolute;left:884px;top:140px" width="139" height="18"><rect x="1.40" y="1.00" width="136.60" height="15.20" fill="#1f1f1f"/></svg>
<svg style="position:absolute;left:888.80px;top:146.60px;" width="2" height="4.4" viewBox="0 0 2 4.4"><path d="M1 .2 V4.2" stroke="#4e4e4e" stroke-width="1"/></svg>
<svg style="position:absolute;left:893px;top:140px" width="21" height="18"><rect x="1.60" y="1.80" width="18.20" height="14.40" fill="#3a3a3a"/></svg>




<svg style="position:absolute;left:929px;top:141px" width="4" height="16"><rect x="1.40" y="1.00" width="0.80" height="14.00" fill="#333"/></svg>
<svg style="position:absolute;left:947px;top:141px" width="4" height="16"><rect x="1.30" y="1.00" width="0.80" height="14.00" fill="#333"/></svg>
<svg style="position:absolute;left:1012.20px;top:146.40px;" width="5" height="5" viewBox="0 0 5 5"><path d="M0 .6 H5 M0 2.4 H5 M0 4.2 H5" stroke="#d8d8d8" stroke-width=".9"/></svg>
<span class="t" style="left:911.20px;top:162px;line-height:8px;font-size:5.90px;color:#c8c8c8;-webkit-text-stroke:0.12px;">:</span>
<svg style="position:absolute;left:913px;top:158px" width="29" height="13"><rect x="1.40" y="1.60" width="25.80" height="10.20" rx="1.20" fill="#3c3c3c"/></svg>
<svg style="position:absolute;left:932px;top:158px" width="4" height="13"><rect x="1.90" y="1.60" width="0.60" height="10.20" fill="#343434"/></svg>
<span class="t" style="left:916.00px;top:162px;line-height:8px;font-size:6.20px;color:#9c9c9c;letter-spacing:-0.12px;-webkit-text-stroke:0.12px;">100 %</span>
<svg style="position:absolute;left:935.60px;top:163.50px;" width="3.4" height="3" viewBox="0 0 3.4 3"><path d="M.5 .8 L1.7 2.1 L2.9 .8" fill="none" stroke="#777" stroke-width=".6"/></svg>
<svg style="position:absolute;left:941px;top:158px" width="57" height="13"><rect x="1.40" y="1.40" width="54.50" height="10.30" rx="1.20" fill="#3f3f3f"/></svg>

<svg style="position:absolute;left:990.80px;top:162.00px;" width="3.4" height="6" viewBox="0 0 3.4 6"><path d="M.5 2.2 L1.7 .9 L2.9 2.2 M.5 3.8 L1.7 5.1 L2.9 3.8" fill="none" stroke="#777" stroke-width=".6"/></svg>
<svg style="position:absolute;left:1000.40px;top:161.60px;" width="6.4" height="6.4" viewBox="0 0 6.4 6.4"><circle cx="3.2" cy="3.2" r="1.9" fill="none" stroke="#cfcfcf" stroke-width="1.3"/><path d="M3.2 0 V6.4 M0 3.2 H6.4 M.9 .9 L5.5 5.5 M5.5 .9 L.9 5.5" stroke="#cfcfcf" stroke-width=".9"/><circle cx="3.2" cy="3.2" r=".8" fill="#383838"/></svg>
<svg style="position:absolute;left:1011.60px;top:161.20px;" width="5.2" height="7" viewBox="0 0 5.2 7"><path d="M1.5 3.2 V2.1 A1.1 1.1 0 0 1 3.7 2.1 V3.2" fill="none" stroke="#d0d0d0" stroke-width=".7"/><rect x=".8" y="3.2" width="3.6" height="3.2" rx=".5" fill="#c4c4c4"/></svg>
<svg style="position:absolute;left:884px;top:170px" width="139" height="216"><rect x="1.40" y="1.50" width="136.60" height="213.50" fill="#1c1c1c"/></svg>
<svg style="position:absolute;left:884px;top:384px" width="139" height="20"><rect x="1.40" y="1.00" width="136.60" height="17.60" fill="#383838"/></svg>
<svg style="position:absolute;left:884px;top:383px" width="139" height="4"><rect x="1.40" y="1.60" width="136.60" height="0.80" fill="#2a2a2a"/></svg>
<svg style="position:absolute;left:889.60px;top:389.80px;" width="7.4" height="7.6" viewBox="0 0 7.4 7.6"><rect x=".6" y=".6" width="4" height="4.6" rx=".9" fill="#2e2e2e" stroke="#8c8c8c" stroke-width=".7"/><rect x="2.8" y="2.6" width="4" height="4.6" rx=".9" fill="#6a6a6a" stroke="#8c8c8c" stroke-width=".6"/></svg>
<svg style="position:absolute;left:927.60px;top:390.00px;" width="8" height="6.6" viewBox="0 0 8 6.6"><rect x=".3" y=".3" width="7.4" height="6" fill="#c4c4c4"/><circle cx="4" cy="3.3" r="1.9" fill="#383838"/></svg>
<svg style="position:absolute;left:939.00px;top:389.20px;" width="9" height="9" viewBox="0 0 9 9"><circle cx="4.5" cy="4.5" r="3.9" fill="none" stroke="#c4c4c4" stroke-width=".7"/><path d="M1.9 7.3 A3.9 3.9 0 0 0 7.3 1.9 Z" fill="#c4c4c4"/></svg>
<span class="t" style="left:950.47px;top:391px;line-height:8px;font-size:6.30px;color:#d8d8d8;letter-spacing:-0.20px;font-weight:bold;">FX</span>
<svg style="position:absolute;left:950px;top:388px" width="9" height="3"><rect x="1.00" y="1.00" width="6.80" height="0.65" fill="#c4c4c4"/></svg>
<svg style="position:absolute;left:950px;top:396px" width="9" height="3"><rect x="1.00" y="1.20" width="6.80" height="0.65" fill="#c4c4c4"/></svg>
<svg style="position:absolute;left:961.80px;top:389.80px;" width="6" height="7.6" viewBox="0 0 6 7.6"><path d="M.6 .4 H5.4 V1.4 L3.8 3.8 L5.4 6.2 V7.2 H.6 V6.2 L2.2 3.8 L.6 1.4Z" fill="#c4c4c4"/></svg>
<svg style="position:absolute;left:986.60px;top:389.40px;" width="8.6" height="7.6" viewBox="0 0 8.6 7.6"><path d="M.3 1.2 H3.2 L4 2.2 H8.3 V7.3 H.3Z" fill="#b0b0b0"/><path d="M1.6 .4 H3.8 L4.6 1.4 H8.3" fill="none" stroke="#b0b0b0" stroke-width=".5"/></svg>
<svg style="position:absolute;left:999.40px;top:389.20px;" width="6.4" height="8.8" viewBox="0 0 6.4 8.8"><rect x=".4" y=".4" width="5.6" height="8" rx=".5" fill="none" stroke="#9a9a9a" stroke-width=".65"/><path d="M1.9 2.2 H2.9 M3.6 2.2 H4.6 M1.9 4.4 H2.9 M3.6 4.4 H4.6 M1.9 6.6 H2.9 M3.6 6.6 H4.6" stroke="#9a9a9a" stroke-width=".9"/></svg>
<svg style="position:absolute;left:1011.60px;top:389.00px;" width="6.6" height="9" viewBox="0 0 6.6 9"><path d="M.4 1.7 H6.2 M2.2 1.5 V.6 H4.4 V1.5" fill="none" stroke="#9a9a9a" stroke-width=".65"/><path d="M1.1 2.6 H5.5 V8.4 H1.1Z" fill="none" stroke="#9a9a9a" stroke-width=".65"/><path d="M2.5 3.6 V7.4 M4.1 3.6 V7.4" stroke="#9a9a9a" stroke-width=".5"/></svg>
<svg style="position:absolute;left:884px;top:401px" width="139" height="4"><rect x="1.40" y="1.40" width="136.60" height="1.00" fill="#1a1a1a"/></svg>
<svg style="position:absolute;left:884px;top:402px" width="139" height="17"><rect x="1.40" y="1.40" width="136.60" height="14.40" fill="#1f1f1f"/></svg>
<svg style="position:absolute;left:888.80px;top:408.40px;" width="2" height="4.4" viewBox="0 0 2 4.4"><path d="M1 .2 V4.2" stroke="#4e4e4e" stroke-width="1"/></svg>
<svg style="position:absolute;left:893px;top:403px" width="27" height="16"><rect x="1.90" y="1.20" width="23.20" height="13.60" fill="#3a3a3a"/></svg>


<svg style="position:absolute;left:935px;top:403px" width="3" height="16"><rect x="1.00" y="1.40" width="0.80" height="13.00" fill="#333"/></svg>

<svg style="position:absolute;left:1012.10px;top:407.60px;" width="5.2" height="5.6" viewBox="0 0 5.2 5.6"><path d="M0 .5 H5.2 M0 2 H5.2 M0 3.5 H5.2 M0 5 H5.2" stroke="#a4a4a4" stroke-width=".85"/></svg>
<svg style="position:absolute;left:889px;top:422px" width="10" height="10"><rect x="1.60" y="1.40" width="7.20" height="7.50" rx="1.00" fill="#3f3f3f"/></svg>
<svg style="position:absolute;left:891px;top:425px" width="6" height="4"><rect x="1.40" y="1.90" width="3.50" height="0.60" fill="#505050"/></svg>
<svg style="position:absolute;left:900px;top:423px" width="83" height="7"><rect x="1.80" y="1.00" width="79.50" height="4.50" rx="1.20" fill="#303030"/></svg>
<svg style="position:absolute;left:901px;top:422px" width="6" height="8"><rect x="1.50" y="1.70" width="2.60" height="5.30" rx="0.70" fill="#727272"/></svg>
<svg style="position:absolute;left:905px;top:429px" width="4" height="3"><rect x="1.60" y="1.20" width="0.80" height="0.80" fill="#5a5a5a"/></svg>
<svg style="position:absolute;left:916px;top:429px" width="3" height="3"><rect x="1.00" y="1.20" width="0.80" height="0.80" fill="#5a5a5a"/></svg>
<svg style="position:absolute;left:929px;top:429px" width="4" height="3"><rect x="1.40" y="1.20" width="0.80" height="0.80" fill="#5a5a5a"/></svg>
<svg style="position:absolute;left:933px;top:429px" width="3" height="3"><rect x="1.00" y="1.20" width="0.80" height="0.80" fill="#5a5a5a"/></svg>
<svg style="position:absolute;left:941px;top:429px" width="4" height="3"><rect x="1.40" y="1.20" width="0.80" height="0.80" fill="#5a5a5a"/></svg>
<svg style="position:absolute;left:950px;top:429px" width="4" height="3"><rect x="1.40" y="1.20" width="0.80" height="0.80" fill="#5a5a5a"/></svg>
<svg style="position:absolute;left:960px;top:429px" width="3" height="3"><rect x="1.00" y="1.20" width="0.80" height="0.80" fill="#5a5a5a"/></svg>
<svg style="position:absolute;left:965px;top:429px" width="4" height="3"><rect x="1.60" y="1.20" width="0.80" height="0.80" fill="#5a5a5a"/></svg>
<svg style="position:absolute;left:969px;top:429px" width="4" height="3"><rect x="1.60" y="1.20" width="0.80" height="0.80" fill="#5a5a5a"/></svg>
<svg style="position:absolute;left:983px;top:422px" width="10" height="10"><rect x="1.40" y="1.40" width="7.20" height="7.50" rx="1.00" fill="#3f3f3f"/></svg>
<svg style="position:absolute;left:985px;top:425px" width="6" height="4"><rect x="1.30" y="1.90" width="3.50" height="0.60" fill="#505050"/></svg>
<svg style="position:absolute;left:986px;top:424px" width="4" height="6"><rect x="1.75" y="1.45" width="0.60" height="3.50" fill="#505050"/></svg>
<svg style="position:absolute;left:994px;top:421px" width="25" height="12"><rect x="1.60" y="1.10" width="22.00" height="9.60" rx="1.00" fill="#3d3d3d"/></svg>
<span class="t" style="left:997.50px;top:424px;line-height:8px;font-size:6.30px;color:#8c8c8c;letter-spacing:-0.10px;-webkit-text-stroke:0.12px;">25 %</span>
<svg style="position:absolute;left:884px;top:435px" width="139" height="3"><rect x="1.40" y="1.00" width="136.60" height="0.80" fill="#2e2e2e"/></svg>
<div style="position:absolute;left:234.20px;top:93.70px;width:552.70px;height:349.00px;background:#353535;border-radius:4.5px;box-shadow:0 8px 22px 4px rgba(0,0,0,.55),0 0 0 .6px rgba(0,0,0,.6);overflow:hidden" id="dlg">
</div>
<div style="position:absolute;left:234.20px;top:93.70px;width:552.70px;height:349.00px;border-radius:4.5px;box-shadow:inset 0 .8px 0 0 #4e4e4e, inset .6px 0 0 0 #444, inset -.6px 0 0 0 #444;pointer-events:none"></div>
<div style="position:absolute;left:234.20px;top:93.70px;width:552.70px;height:14.60px;background:#393939;border-radius:4.5px 4.5px 0 0;box-shadow:inset 0 .9px 0 0 #505050, inset .6px 0 0 0 #454545, inset -.6px 0 0 0 #454545;"></div>
<svg style="position:absolute;left:233px;top:106px" width="555" height="4"><rect x="1.20" y="1.90" width="552.70" height="0.90" fill="#282828"/></svg>
<svg style="position:absolute;left:237px;top:96px" width="9" height="10"><rect x="1.05" y="1.95" width="6.10" height="6.10" rx="3.05" fill="#ec6a5e"/></svg>
<svg style="position:absolute;left:247px;top:96px" width="9" height="10"><rect x="1.35" y="1.95" width="6.10" height="6.10" rx="3.05" fill="#f4bf4f"/></svg>
<svg style="position:absolute;left:257px;top:96px" width="9" height="10"><rect x="1.75" y="1.95" width="6.10" height="6.10" rx="3.05" fill="#61c554"/></svg>

<svg style="position:absolute;left:270px;top:108px" width="3" height="334"><rect x="1.00" y="1.00" width="0.90" height="332.00" fill="#272727"/></svg>
<svg style="position:absolute;left:236px;top:150px" width="33" height="32"><rect x="1.20" y="1.90" width="30.80" height="28.60" rx="1.50" fill="#4a4a4a"/></svg>
<svg style="position:absolute;left:245.70px;top:119.20px;" width="14" height="14" viewBox="0 0 14 14"><circle cx="7" cy="7" r="6.2" fill="none" stroke="#9c9c9c" stroke-width=".8"/><circle cx="7" cy="5.6" r="2.1" fill="none" stroke="#9c9c9c" stroke-width=".8"/><path d="M3 11.4 Q3.4 8.2 7 8.2 Q10.6 8.2 11 11.4" fill="none" stroke="#9c9c9c" stroke-width=".8"/></svg>

<svg style="position:absolute;left:247.00px;top:156.20px;" width="12" height="13" viewBox="0 0 12 13"><path d="M.8 .6 H6.6 L10.2 4.2 V12.2 H.8Z M6.6 .6 V4.2 H10.2" fill="none" stroke="#f0f0f0" stroke-width=".8" stroke-linejoin="round"/><path d="M7 6.8 V10.2 M5.3 8.5 H8.7" stroke="#f0f0f0" stroke-width=".8"/></svg>

<svg style="position:absolute;left:245.60px;top:193.40px;" width="14" height="12" viewBox="0 0 14 12"><path d="M.8 11 V2.2 H2.2 M.8 11 H13 V3.4 H6.6 L5.4 1.4 H2.6 L2 2.6" fill="none" stroke="#8a8a8a" stroke-width=".8" stroke-linejoin="round"/><path d="M2.2 3.4 V1 H12 V3.4" fill="none" stroke="#8a8a8a" stroke-width=".6"/></svg>

<svg style="position:absolute;left:245.40px;top:230.00px;" width="14.6" height="14.6" viewBox="0 0 14.6 14.6"><circle cx="7.6" cy="7.3" r="6.2" fill="none" stroke="#8a8a8a" stroke-width=".8" stroke-dasharray="34 5" transform="rotate(-150 7.6 7.3)"/><circle cx="7.6" cy="7.3" r="4.4" fill="none" stroke="#8a8a8a" stroke-width=".8"/><path d="M7.6 4.8 V7.5 H9.6" fill="none" stroke="#8a8a8a" stroke-width=".8"/></svg>

<svg style="position:absolute;left:246.00px;top:267.20px;" width="14" height="14" viewBox="0 0 14 14"><rect x=".6" y=".6" width="10" height="10.6" fill="none" stroke="#8e8e8e" stroke-width=".8"/><path d="M2.8 11.6 V13 H12.6 V2.8 H11" fill="none" stroke="#8e8e8e" stroke-width=".8"/><path d="M2.6 3.4 H6.6" stroke="#8e8e8e" stroke-width=".9"/><rect x="2.6" y="5.4" width="6" height="2.6" fill="none" stroke="#8e8e8e" stroke-width=".7"/></svg>

<svg style="position:absolute;left:245.60px;top:304.40px;" width="14" height="13" viewBox="0 0 14 13"><rect x=".8" y=".8" width="12.4" height="9.4" rx=".8" fill="none" stroke="#8a8a8a" stroke-width=".8"/><path d="M1.4 8 L4.6 4.4 L7.4 7.2 L9.2 5.6 L12.6 8.6" fill="none" stroke="#8a8a8a" stroke-width=".7"/><circle cx="9.8" cy="3.2" r=".9" fill="none" stroke="#8a8a8a" stroke-width=".6"/><path d="M1 11.8 H13" stroke="#8a8a8a" stroke-width=".8"/></svg>

<svg style="position:absolute;left:273px;top:111px" width="130" height="13"><rect x="1.90" y="1.20" width="126.20" height="10.60" rx="1.00" fill="#1e1e1e"/></svg>
<svg style="position:absolute;left:277.80px;top:114.60px;" width="5.6" height="5.8" viewBox="0 0 5.6 5.8"><circle cx="2.2" cy="2.2" r="1.6" fill="none" stroke="#9a9a9a" stroke-width=".7"/><path d="M3.4 3.5 L5 5.2" stroke="#9a9a9a" stroke-width=".8"/></svg>
<svg style="position:absolute;left:273px;top:127px" width="52" height="15"><rect x="1.40" y="1.70" width="49.50" height="11.50" rx="1.40" fill="#484848"/></svg>
<svg style="position:absolute;left:271px;top:124px" width="135" height="4"><rect x="1.00" y="1.90" width="133.00" height="0.80" fill="#2d2d2d"/></svg>
<span class="t" style="left:277.10px;top:132px;line-height:8px;font-size:5.90px;color:#e4e4e4;letter-spacing:-0.08px;-webkit-text-stroke:0.04px;">Web</span>
<svg style="position:absolute;left:317.60px;top:131.20px;" width="3.6" height="6.6" viewBox="0 0 3.6 6.6"><path d="M.6 2.4 L1.8 1.1 L3 2.4 M.6 4.2 L1.8 5.5 L3 4.2" fill="none" stroke="#aaa" stroke-width=".6"/></svg>
<svg style="position:absolute;left:328.30px;top:130.90px;" width="6.6" height="6.6" viewBox="0 0 10 10"><path d="M5 9 L1.4 5.4 A2.2 2.2 0 0 1 5 2.6 A2.2 2.2 0 0 1 8.6 5.4 Z" fill="none" stroke="#9a9a9a" stroke-width="0.984848" stroke-linejoin="round"/></svg>
<svg style="position:absolute;left:371px;top:128px" width="17" height="13"><rect x="1.80" y="1.60" width="13.60" height="10.40" rx="1.00" fill="#525252"/></svg>
<svg style="position:absolute;left:385px;top:128px" width="17" height="13"><rect x="1.40" y="1.60" width="14.00" height="10.40" rx="1.00" fill="#202020"/></svg>
<svg style="position:absolute;left:376.60px;top:131.00px;" width="6" height="8" viewBox="0 0 6 8"><path d="M.6 .5 H3.6 L5.4 2.4 V7.5 H.6Z M3.6 .5 V2.4 H5.4" fill="none" stroke="#e0e0e0" stroke-width=".7" stroke-linejoin="round"/></svg>
<svg style="position:absolute;left:389.40px;top:131.60px;" width="8.4" height="6.4" viewBox="0 0 8.4 6.4"><path d="M.5 5.8 V2.4 L2.4 .6 H7.8 V5.8Z M.5 2.4 H2.4 V.6" fill="none" stroke="#d0d0d0" stroke-width=".7" stroke-linejoin="round"/></svg>
<svg style="position:absolute;left:270px;top:143px" width="128" height="252"><rect x="1.90" y="1.10" width="125.00" height="249.70" fill="#1b1b1b"/></svg>
<svg style="position:absolute;left:395px;top:143px" width="12" height="252"><rect x="1.90" y="1.10" width="8.20" height="249.70" fill="#282828"/></svg>
<svg style="position:absolute;left:404px;top:108px" width="3" height="305"><rect x="1.10" y="1.00" width="0.90" height="303.00" fill="#272727"/></svg>
<svg style="position:absolute;left:271px;top:142px" width="126" height="19"><rect x="1.90" y="1.90" width="123.00" height="16.00" rx="1.50" fill="#212121"/></svg>
<svg style="position:absolute;left:274.80px;top:147.80px;" width="8.4" height="8.6" viewBox="0 0 8.4 8.6"><rect x=".5" y=".5" width="7.3" height="7.3" rx=".5" fill="none" stroke="#b4b4b4" stroke-width=".7"/><rect x="1" y="5.4" width="6.3" height="2" fill="#b4b4b4" opacity=".3"/><path d="M.6 5.4 H7.7" stroke="#b4b4b4" stroke-width=".6"/></svg>
<span class="t" style="left:285.80px;top:149px;line-height:8px;font-size:5.90px;color:#dadada;">FHD 1080p</span>
<span class="t" style="left:343.96px;top:150px;line-height:7px;font-size:5.20px;color:#cecece;">1920 px × 1080 px</span>
<svg style="position:absolute;left:389.70px;top:149.40px;" width="5.2" height="5.2" viewBox="0 0 10 10"><path d="M5 9 L1.4 5.4 A2.2 2.2 0 0 1 5 2.6 A2.2 2.2 0 0 1 8.6 5.4 Z" fill="none" stroke="#8a8a8a" stroke-width="0.865385" stroke-linejoin="round"/></svg>
<svg style="position:absolute;left:274.80px;top:164.20px;" width="8.4" height="8.6" viewBox="0 0 8.4 8.6"><rect x=".5" y=".5" width="7.3" height="7.3" rx=".5" fill="none" stroke="#b4b4b4" stroke-width=".7"/><rect x="1" y="5.4" width="6.3" height="2" fill="#b4b4b4" opacity=".3"/><path d="M.6 5.4 H7.7" stroke="#b4b4b4" stroke-width=".6"/></svg>
<span class="t" style="left:285.80px;top:165px;line-height:8px;font-size:5.90px;color:#dadada;">WQHD</span>
<span class="t" style="left:343.96px;top:166px;line-height:7px;font-size:5.20px;color:#cecece;">2560 px × 1440 px</span>
<svg style="position:absolute;left:389.70px;top:165.80px;" width="5.2" height="5.2" viewBox="0 0 10 10"><path d="M5 9 L1.4 5.4 A2.2 2.2 0 0 1 5 2.6 A2.2 2.2 0 0 1 8.6 5.4 Z" fill="none" stroke="#8a8a8a" stroke-width="0.865385" stroke-linejoin="round"/></svg>
<svg style="position:absolute;left:271px;top:175px" width="126" height="19"><rect x="1.90" y="1.80" width="123.00" height="16.00" rx="1.50" fill="#212121"/></svg>
<svg style="position:absolute;left:274.80px;top:180.70px;" width="8.4" height="8.6" viewBox="0 0 8.4 8.6"><rect x=".5" y=".5" width="7.3" height="7.3" rx=".5" fill="none" stroke="#b4b4b4" stroke-width=".7"/><rect x="1" y="5.4" width="6.3" height="2" fill="#b4b4b4" opacity=".3"/><path d="M.6 5.4 H7.7" stroke="#b4b4b4" stroke-width=".6"/></svg>
<span class="t" style="left:285.80px;top:182px;line-height:8px;font-size:5.90px;color:#dadada;">QFHD</span>
<span class="t" style="left:343.96px;top:183px;line-height:7px;font-size:5.20px;color:#cecece;">3840 px × 2160 px</span>
<svg style="position:absolute;left:389.70px;top:182.30px;" width="5.2" height="5.2" viewBox="0 0 10 10"><path d="M5 9 L1.4 5.4 A2.2 2.2 0 0 1 5 2.6 A2.2 2.2 0 0 1 8.6 5.4 Z" fill="none" stroke="#8a8a8a" stroke-width="0.865385" stroke-linejoin="round"/></svg>
<svg style="position:absolute;left:272px;top:192px" width="125" height="18"><rect x="1.00" y="1.90" width="123.00" height="15.10" rx="2.00" fill="#3c5383"/></svg>
<svg style="position:absolute;left:274.80px;top:197.30px;" width="8.4" height="8.6" viewBox="0 0 8.4 8.6"><rect x=".5" y=".5" width="7.3" height="7.3" rx=".5" fill="none" stroke="#a0accc" stroke-width=".7"/><rect x="1" y="5.4" width="6.3" height="2" fill="#a0accc" opacity=".3"/><path d="M.6 5.4 H7.7" stroke="#a0accc" stroke-width=".6"/></svg>
<span class="t" style="left:285.80px;top:198px;line-height:8px;font-size:5.90px;color:#dadada;">Social Media Square...</span>
<span class="t" style="left:343.96px;top:199px;line-height:7px;font-size:5.20px;color:#cecece;">1080 px × 1080 px</span>
<svg style="position:absolute;left:389.70px;top:198.90px;" width="5.2" height="5.2" viewBox="0 0 10 10"><path d="M5 9 L1.4 5.4 A2.2 2.2 0 0 1 5 2.6 A2.2 2.2 0 0 1 8.6 5.4 Z" fill="none" stroke="#8a8a8a" stroke-width="0.865385" stroke-linejoin="round"/></svg>
<svg style="position:absolute;left:271px;top:209px" width="126" height="19"><rect x="1.90" y="1.10" width="123.00" height="16.00" rx="1.50" fill="#212121"/></svg>
<svg style="position:absolute;left:274.80px;top:214.00px;" width="8.4" height="8.6" viewBox="0 0 8.4 8.6"><rect x=".5" y=".5" width="7.3" height="7.3" rx=".5" fill="none" stroke="#b4b4b4" stroke-width=".7"/><rect x="1" y="5.4" width="6.3" height="2" fill="#b4b4b4" opacity=".3"/><path d="M.6 5.4 H7.7" stroke="#b4b4b4" stroke-width=".6"/></svg>
<span class="t" style="left:285.80px;top:215px;line-height:8px;font-size:5.90px;color:#dadada;">Social Media Story...</span>
<span class="t" style="left:343.96px;top:216px;line-height:7px;font-size:5.20px;color:#cecece;">1920 px × 1080 px</span>
<svg style="position:absolute;left:389.70px;top:215.60px;" width="5.2" height="5.2" viewBox="0 0 10 10"><path d="M5 9 L1.4 5.4 A2.2 2.2 0 0 1 5 2.6 A2.2 2.2 0 0 1 8.6 5.4 Z" fill="none" stroke="#8a8a8a" stroke-width="0.865385" stroke-linejoin="round"/></svg>
<svg style="position:absolute;left:274.80px;top:230.60px;" width="8.4" height="8.6" viewBox="0 0 8.4 8.6"><rect x=".5" y=".5" width="7.3" height="7.3" rx=".5" fill="none" stroke="#b4b4b4" stroke-width=".7"/><rect x="1" y="5.4" width="6.3" height="2" fill="#b4b4b4" opacity=".3"/><path d="M.6 5.4 H7.7" stroke="#b4b4b4" stroke-width=".6"/></svg>
<span class="t" style="left:285.80px;top:232px;line-height:8px;font-size:5.90px;color:#dadada;">Social Media Portrai...</span>
<span class="t" style="left:343.96px;top:233px;line-height:7px;font-size:5.20px;color:#cecece;">1350 px × 1080 px</span>
<svg style="position:absolute;left:389.70px;top:232.20px;" width="5.2" height="5.2" viewBox="0 0 10 10"><path d="M5 9 L1.4 5.4 A2.2 2.2 0 0 1 5 2.6 A2.2 2.2 0 0 1 8.6 5.4 Z" fill="none" stroke="#8a8a8a" stroke-width="0.865385" stroke-linejoin="round"/></svg>
<svg style="position:absolute;left:274.80px;top:263.90px;" width="8.4" height="7.4" viewBox="0 0 8.4 7.4"><rect x=".5" y=".5" width="7.3" height="6.3" rx=".4" fill="none" stroke="#b4b4b4" stroke-width=".65"/></svg>
<span class="t" style="left:285.80px;top:264px;line-height:8px;font-size:5.90px;color:#dadada;">iPad Mini</span>
<span class="t" style="left:349.17px;top:265px;line-height:7px;font-size:5.20px;color:#cecece;">1024 pt × 768 pt</span>
<svg style="position:absolute;left:389.70px;top:265.00px;" width="5.2" height="5.2" viewBox="0 0 10 10"><path d="M5 9 L1.4 5.4 A2.2 2.2 0 0 1 5 2.6 A2.2 2.2 0 0 1 8.6 5.4 Z" fill="none" stroke="#8a8a8a" stroke-width="0.865385" stroke-linejoin="round"/></svg>
<svg style="position:absolute;left:271px;top:274px" width="126" height="19"><rect x="1.90" y="1.90" width="123.00" height="16.00" rx="1.50" fill="#212121"/></svg>
<svg style="position:absolute;left:274.80px;top:280.30px;" width="8.4" height="7.4" viewBox="0 0 8.4 7.4"><rect x=".5" y=".5" width="7.3" height="6.3" rx=".4" fill="none" stroke="#b4b4b4" stroke-width=".65"/></svg>
<span class="t" style="left:285.80px;top:281px;line-height:8px;font-size:5.90px;color:#dadada;">iPad 9.7&quot;</span>
<span class="t" style="left:349.17px;top:282px;line-height:7px;font-size:5.20px;color:#cecece;">1024 pt × 768 pt</span>
<svg style="position:absolute;left:389.70px;top:281.40px;" width="5.2" height="5.2" viewBox="0 0 10 10"><path d="M5 9 L1.4 5.4 A2.2 2.2 0 0 1 5 2.6 A2.2 2.2 0 0 1 8.6 5.4 Z" fill="none" stroke="#8a8a8a" stroke-width="0.865385" stroke-linejoin="round"/></svg>
<svg style="position:absolute;left:274.80px;top:296.70px;" width="8.4" height="7.4" viewBox="0 0 8.4 7.4"><rect x=".5" y=".5" width="7.3" height="6.3" rx=".4" fill="none" stroke="#b4b4b4" stroke-width=".65"/></svg>
<span class="t" style="left:285.80px;top:297px;line-height:8px;font-size:5.90px;color:#dadada;">iPad 10.5&quot;</span>
<span class="t" style="left:349.17px;top:298px;line-height:7px;font-size:5.20px;color:#cecece;">1112 pt × 834 pt</span>
<svg style="position:absolute;left:389.70px;top:297.80px;" width="5.2" height="5.2" viewBox="0 0 10 10"><path d="M5 9 L1.4 5.4 A2.2 2.2 0 0 1 5 2.6 A2.2 2.2 0 0 1 8.6 5.4 Z" fill="none" stroke="#8a8a8a" stroke-width="0.865385" stroke-linejoin="round"/></svg>
<svg style="position:absolute;left:271px;top:307px" width="126" height="19"><rect x="1.90" y="1.70" width="123.00" height="16.00" rx="1.50" fill="#212121"/></svg>
<svg style="position:absolute;left:274.80px;top:313.10px;" width="8.4" height="7.4" viewBox="0 0 8.4 7.4"><rect x=".5" y=".5" width="7.3" height="6.3" rx=".4" fill="none" stroke="#b4b4b4" stroke-width=".65"/></svg>
<span class="t" style="left:285.80px;top:314px;line-height:8px;font-size:5.90px;color:#dadada;">iPad 11&quot;</span>
<span class="t" style="left:349.17px;top:315px;line-height:7px;font-size:5.20px;color:#cecece;">1194 pt × 834 pt</span>
<svg style="position:absolute;left:389.70px;top:314.20px;" width="5.2" height="5.2" viewBox="0 0 10 10"><path d="M5 9 L1.4 5.4 A2.2 2.2 0 0 1 5 2.6 A2.2 2.2 0 0 1 8.6 5.4 Z" fill="none" stroke="#8a8a8a" stroke-width="0.865385" stroke-linejoin="round"/></svg>
<svg style="position:absolute;left:274.80px;top:329.60px;" width="8.4" height="7.4" viewBox="0 0 8.4 7.4"><rect x=".5" y=".5" width="7.3" height="6.3" rx=".4" fill="none" stroke="#b4b4b4" stroke-width=".65"/></svg>
<span class="t" style="left:285.80px;top:330px;line-height:8px;font-size:5.90px;color:#dadada;">iPad 12.9&quot;</span>
<span class="t" style="left:346.27px;top:331px;line-height:7px;font-size:5.20px;color:#cecece;">1366 pt × 1024 pt</span>
<svg style="position:absolute;left:389.70px;top:330.70px;" width="5.2" height="5.2" viewBox="0 0 10 10"><path d="M5 9 L1.4 5.4 A2.2 2.2 0 0 1 5 2.6 A2.2 2.2 0 0 1 8.6 5.4 Z" fill="none" stroke="#8a8a8a" stroke-width="0.865385" stroke-linejoin="round"/></svg>
<svg style="position:absolute;left:271px;top:340px" width="126" height="19"><rect x="1.90" y="1.70" width="123.00" height="16.00" rx="1.50" fill="#212121"/></svg>
<svg style="position:absolute;left:274.80px;top:346.80px;" width="8.4" height="6" viewBox="0 0 8.4 6"><rect x=".5" y=".5" width="7.3" height="4.7" rx=".4" fill="none" stroke="#b4b4b4" stroke-width=".65"/></svg>
<span class="t" style="left:285.80px;top:347px;line-height:8px;font-size:5.90px;color:#dadada;">iPhone 6/7/8</span>
<span class="t" style="left:352.06px;top:348px;line-height:7px;font-size:5.20px;color:#cecece;">667 pt × 375 pt</span>
<svg style="position:absolute;left:389.70px;top:347.20px;" width="5.2" height="5.2" viewBox="0 0 10 10"><path d="M5 9 L1.4 5.4 A2.2 2.2 0 0 1 5 2.6 A2.2 2.2 0 0 1 8.6 5.4 Z" fill="none" stroke="#8a8a8a" stroke-width="0.865385" stroke-linejoin="round"/></svg>
<svg style="position:absolute;left:274.80px;top:363.30px;" width="8.4" height="6" viewBox="0 0 8.4 6"><rect x=".5" y=".5" width="7.3" height="4.7" rx=".4" fill="none" stroke="#b4b4b4" stroke-width=".65"/></svg>
<span class="t" style="left:285.80px;top:363px;line-height:8px;font-size:5.90px;color:#dadada;">iPhone 6/7/8 Plus</span>
<span class="t" style="left:352.06px;top:364px;line-height:7px;font-size:5.20px;color:#cecece;">736 pt × 414 pt</span>
<svg style="position:absolute;left:389.70px;top:363.70px;" width="5.2" height="5.2" viewBox="0 0 10 10"><path d="M5 9 L1.4 5.4 A2.2 2.2 0 0 1 5 2.6 A2.2 2.2 0 0 1 8.6 5.4 Z" fill="none" stroke="#8a8a8a" stroke-width="0.865385" stroke-linejoin="round"/></svg>
<svg style="position:absolute;left:271px;top:373px" width="126" height="19"><rect x="1.90" y="1.80" width="123.00" height="16.00" rx="1.50" fill="#212121"/></svg>
<svg style="position:absolute;left:274.80px;top:379.90px;" width="8.4" height="6" viewBox="0 0 8.4 6"><rect x=".5" y=".5" width="7.3" height="4.7" rx=".4" fill="none" stroke="#b4b4b4" stroke-width=".65"/></svg>
<span class="t" style="left:285.80px;top:380px;line-height:8px;font-size:5.90px;color:#dadada;">iPhone X/XS</span>
<span class="t" style="left:352.06px;top:381px;line-height:7px;font-size:5.20px;color:#cecece;">812 pt × 375 pt</span>
<svg style="position:absolute;left:389.70px;top:380.30px;" width="5.2" height="5.2" viewBox="0 0 10 10"><path d="M5 9 L1.4 5.4 A2.2 2.2 0 0 1 5 2.6 A2.2 2.2 0 0 1 8.6 5.4 Z" fill="none" stroke="#8a8a8a" stroke-width="0.865385" stroke-linejoin="round"/></svg>
<svg style="position:absolute;left:271px;top:242px" width="126" height="18"><rect x="1.90" y="1.30" width="123.00" height="15.40" rx="1.40" fill="#292929"/></svg>
<span class="t" style="left:275.60px;top:248px;line-height:8px;font-size:6.15px;color:#e8e8e8;font-weight:bold;">Devices</span>
<svg style="position:absolute;left:388.00px;top:248.20px;" width="5.2" height="6" viewBox="0 0 5.2 6"><path d="M0 .6 H5.2 M0 2.2 H5.2 M0 3.8 H5.2 M0 5.4 H5.2" stroke="#b0b0b0" stroke-width=".9"/></svg>
<svg style="position:absolute;left:398px;top:287px" width="7" height="65"><rect x="1.90" y="1.40" width="3.20" height="62.00" rx="1.60" fill="#525252"/></svg>
<svg style="position:absolute;left:270px;top:393px" width="137" height="3"><rect x="1.90" y="1.10" width="133.20" height="0.80" fill="#2a2a2a"/></svg>
<svg style="position:absolute;left:270px;top:410px" width="517" height="4"><rect x="1.90" y="1.20" width="514.00" height="0.90" fill="#272727"/></svg>
<svg style="position:absolute;left:276.40px;top:399.00px;" width="7.6" height="9.2" viewBox="0 0 7.6 9.2"><rect x=".5" y=".5" width="6.4" height="8" rx=".7" fill="none" stroke="#b4b4b4" stroke-width=".7"/><path d="M.6 2 H6.8" stroke="#b4b4b4" stroke-width=".7"/><path d="M3.7 3.8 V6.8 M2.2 5.3 H5.2" stroke="#b4b4b4" stroke-width=".6"/></svg>
<svg style="position:absolute;left:287.40px;top:399.40px;" width="9" height="9" viewBox="0 0 9 9"><path d="M1.4 2 V7 H3.4 M1.4 4.8 H3.4" fill="none" stroke="#b4b4b4" stroke-width=".6"/><path d="M.4 1 H2.4 M1.4 0 V2" stroke="#b4b4b4" stroke-width=".6"/><path d="M4.2 4.7 H8.2 M4.2 7 H8.2" stroke="#c8c8c8" stroke-width=".95"/></svg>
<svg style="position:absolute;left:380.80px;top:399.20px;" width="8.4" height="8.2" viewBox="0 0 8.4 8.2"><path d="M4.2 .6 L7.6 7.4 H.8Z" fill="none" stroke="#8a8a8a" stroke-width=".7"/><path d="M4.2 .6 V7.4 M2.4 4.2 L6 4.2 M1.6 7.4 L4.2 3" stroke="#8a8a8a" stroke-width=".5"/></svg>
<svg style="position:absolute;left:392.80px;top:398.80px;" width="6.8" height="9" viewBox="0 0 6.8 9"><path d="M.2 1.7 H6.6 M2.3 1.5 V.5 H4.5 V1.5" fill="none" stroke="#909090" stroke-width=".6"/><path d="M1 2.6 H5.8 V8.4 H1Z" fill="none" stroke="#909090" stroke-width=".6"/><path d="M2.6 3.6 V7.4 M4.2 3.6 V7.4" stroke="#909090" stroke-width=".45"/></svg>
<svg style="position:absolute;left:281px;top:422px" width="9" height="9"><rect x="1.00" y="1.50" width="6.50" height="6.50" rx="1.20" fill="#222"/></svg>
<svg style="position:absolute;left:283.00px;top:424.50px;" width="4.6" height="4.6" viewBox="0 0 4.6 4.6"><path d="M.8 2.4 L1.9 3.5 L3.8 1" fill="none" stroke="#e8e8e8" stroke-width=".7"/></svg>

<span class="t" style="left:534.07px;top:121px;line-height:13px;font-size:10.80px;color:#e6e6e6;">Social Media Square Post</span>
<svg style="position:absolute;left:524.00px;top:138.00px;" width="146" height="146" viewBox="0 0 146 146"><rect x="1.65" y="1.6" width="141.6" height="141.7" fill="#fff" stroke="#5456ea" stroke-width="1"/></svg>
<svg style="position:absolute;left:563.00px;top:185.00px;" width="67.2" height="50.8" viewBox="0 0 67.2 50.8"><rect x="0" y="0" width="67.2" height="50.7" rx="3.2" fill="#d8d8d8"/><path d="M5.4 46.7 Q4 46.7 4 45.3 V29.2 Q10 27.2 18 29.8 Q29 33.8 37 36.8 Q45.5 39.4 52 35.4 Q58 30.8 63 28.7 V45.3 Q63 46.7 61.6 46.7 Z" fill="#fff"/><circle cx="51" cy="13.2" r="6.45" fill="#fff"/><path d="M7.4 20.7 Q5.9 20.7 5.9 19.2 Q5.9 17.6 8 17.6 L10.6 17.6 Q11 13.8 14.8 13.6 Q16.6 8 23 7.5 Q29 7.4 31.6 13 Q34.5 13.4 35.2 17 Q38.5 17 38.5 19.2 Q38.5 20.7 37 20.7 Z" fill="#fff"/></svg>
<svg style="position:absolute;left:405px;top:311px" width="383" height="3"><rect x="1.00" y="1.10" width="381.00" height="0.90" fill="#272727"/></svg>
<svg style="position:absolute;left:686px;top:312px" width="102" height="101"><rect x="1.00" y="1.00" width="99.80" height="98.20" fill="#313131"/></svg>
<svg style="position:absolute;left:685px;top:312px" width="4" height="101"><rect x="1.20" y="1.00" width="0.90" height="98.40" fill="#272727"/></svg>
<svg style="position:absolute;left:483px;top:317px" width="124" height="14"><rect x="1.60" y="1.90" width="121.30" height="10.40" rx="1.30" fill="#484848"/></svg>
<svg style="position:absolute;left:483px;top:317px" width="43" height="14"><rect x="1.60" y="1.90" width="40.20" height="10.40" rx="1.30" fill="#1e1e1e"/></svg>
<svg style="position:absolute;left:564px;top:317px" width="3" height="14"><rect x="1.00" y="1.90" width="0.70" height="10.40" fill="#3a3a3a"/></svg>



<span class="t" style="left:463.86px;top:342px;line-height:8px;font-size:5.90px;color:#cacaca;-webkit-text-stroke:0.12px;">:</span>
<svg style="position:absolute;left:469px;top:339px" width="33" height="13"><rect x="1.20" y="1.10" width="30.70" height="10.20" rx="0.80" fill="#1d1d1d"/></svg>
<span class="t" style="left:472.10px;top:342px;line-height:8px;font-size:6.20px;color:#e8e8e8;letter-spacing:-0.17px;-webkit-text-stroke:0.05px;">1080 px</span>
<span class="t" style="left:463.86px;top:356px;line-height:8px;font-size:5.90px;color:#cacaca;-webkit-text-stroke:0.12px;">:</span>
<svg style="position:absolute;left:469px;top:352px" width="33" height="13"><rect x="1.20" y="1.70" width="30.70" height="10.20" rx="0.80" fill="#1d1d1d"/></svg>
<span class="t" style="left:472.10px;top:356px;line-height:8px;font-size:6.20px;color:#e8e8e8;letter-spacing:-0.17px;-webkit-text-stroke:0.05px;">1080 px</span>
<span class="t" style="left:454.03px;top:369px;line-height:8px;font-size:5.90px;color:#cacaca;-webkit-text-stroke:0.12px;">DPI:</span>
<svg style="position:absolute;left:469px;top:366px" width="33" height="13"><rect x="1.20" y="1.00" width="30.70" height="10.20" rx="0.80" fill="#1d1d1d"/></svg>
<svg style="position:absolute;left:493px;top:366px" width="3" height="13"><rect x="1.20" y="1.00" width="0.60" height="10.20" fill="#383838"/></svg>
<span class="t" style="left:472.10px;top:369px;line-height:8px;font-size:6.20px;color:#e8e8e8;letter-spacing:-0.17px;-webkit-text-stroke:0.05px;">144</span>
<svg style="position:absolute;left:495.90px;top:370.80px;" width="3.6" height="3" viewBox="0 0 3.6 3"><path d="M.6 .8 L1.8 2.1 L3 .8" fill="none" stroke="#8a8a8a" stroke-width=".6"/></svg>
<span class="t" style="left:576.76px;top:342px;line-height:8px;font-size:5.90px;color:#cacaca;-webkit-text-stroke:0.12px;">:</span>
<svg style="position:absolute;left:580px;top:338px" width="27" height="15"><rect x="1.90" y="1.20" width="23.70" height="12.00" rx="1.40" fill="#454545"/></svg>

<svg style="position:absolute;left:598.60px;top:341.90px;" width="3.6" height="6.6" viewBox="0 0 3.6 6.6"><path d="M.6 2.4 L1.8 1.1 L3 2.4 M.6 4.2 L1.8 5.5 L3 4.2" fill="none" stroke="#b0b0b0" stroke-width=".6"/></svg>
<span class="t" style="left:537.17px;top:356px;line-height:8px;font-size:5.90px;color:#cacaca;-webkit-text-stroke:0.12px;">&quot;</span><span class="t" style="left:562.87px;top:356px;line-height:8px;font-size:5.90px;color:#cacaca;-webkit-text-stroke:0.12px;">&quot;</span><span class="t" style="left:576.76px;top:356px;line-height:8px;font-size:5.90px;color:#cacaca;-webkit-text-stroke:0.12px;">:</span>
<svg style="position:absolute;left:580px;top:351px" width="86" height="15"><rect x="1.90" y="1.80" width="82.90" height="12.00" rx="1.40" fill="#454545"/></svg>

<svg style="position:absolute;left:659.80px;top:355.50px;" width="3.6" height="6.6" viewBox="0 0 3.6 6.6"><path d="M.6 2.4 L1.8 1.1 L3 2.4 M.6 4.2 L1.8 5.5 L3 4.2" fill="none" stroke="#b0b0b0" stroke-width=".6"/></svg>
<span class="t" style="left:576.76px;top:369px;line-height:8px;font-size:5.90px;color:#cacaca;-webkit-text-stroke:0.12px;">:</span>
<svg style="position:absolute;left:580px;top:365px" width="38" height="14"><rect x="1.90" y="1.20" width="34.60" height="11.70" rx="1.40" fill="#454545"/></svg>

<svg style="position:absolute;left:610.50px;top:368.75px;" width="3.6" height="6.6" viewBox="0 0 3.6 6.6"><path d="M.6 2.4 L1.8 1.1 L3 2.4 M.6 4.2 L1.8 5.5 L3 4.2" fill="none" stroke="#b0b0b0" stroke-width=".6"/></svg>
<svg style="position:absolute;left:686px;top:326px" width="102" height="4"><rect x="1.10" y="1.40" width="99.70" height="0.80" fill="#2a2a2a"/></svg>

<span class="t" style="left:695.80px;top:338px;line-height:7px;font-size:5.45px;color:#c2c2c2;">Social Media Square Post</span>
<span class="t" style="left:706.40px;top:350px;line-height:7px;font-size:5.45px;color:#c2c2c2;">: 1080 px x 1080 px</span>
<span class="t" style="left:695.80px;top:362px;line-height:7px;font-size:5.45px;color:#c2c2c2;">DPI:  144</span>
<span class="t" style="left:706.40px;top:375px;line-height:7px;font-size:5.45px;color:#c2c2c2;">: RGB 8 </span>
<svg style="position:absolute;left:734px;top:373px" width="8" height="8"><rect x="1.90" y="1.50" width="5.00" height="4.70" fill="#e8452c"/></svg>
<svg style="position:absolute;left:739px;top:373px" width="8" height="8"><rect x="1.90" y="1.50" width="5.00" height="4.70" fill="#8ef04a"/></svg>
<svg style="position:absolute;left:744px;top:373px" width="8" height="8"><rect x="1.90" y="1.50" width="5.00" height="4.70" fill="#1a3cf0"/></svg>
<span class="t" style="left:727.60px;top:387px;line-height:7px;font-size:5.45px;color:#c2c2c2;-webkit-text-stroke:0.12px;">:</span>
<span class="t" style="left:695.80px;top:394px;line-height:7px;font-size:5.45px;color:#c2c2c2;">sRGB IEC61966-2.1</span>
<svg style="position:absolute;left:675px;top:420px" width="50" height="13"><rect x="1.20" y="1.90" width="47.50" height="10.00" rx="1.30" fill="#474747"/></svg>

<svg style="position:absolute;left:729px;top:420px" width="51" height="13"><rect x="1.00" y="1.90" width="48.30" height="10.00" rx="1.30" fill="#474747"/></svg>

<svg style="position:absolute;left:0;top:0;pointer-events:none" width="1022" height="527" viewBox="0 0 1022 527" font-family="&quot;Liberation Sans&quot;, &quot;Noto Sans CJK SC&quot;, sans-serif"><g fill="#f4f4f4" font-size="5.9"><text x="897.55" y="53.44">直方图</text><text x="897.80" y="151.04">图层</text><text x="897.65" y="412.84">导航器</text></g><g fill="#b4b4b4" font-size="5.7"><text x="921.20" y="53.37">颜色</text><text x="915.80" y="150.97">通道</text><text x="933.50" y="150.97">画笔</text><text x="951.50" y="150.97">库存</text><text x="921.10" y="412.77">变换</text><text x="939.50" y="412.77">历史记录</text></g><g fill="#8e8e8e" font-size="5.7"><text x="891.90" y="70.37">所有通道</text></g><g fill="#868686"><text x="971.10" y="69.10" font-size="5.55">图层</text><text x="997.20" y="69.14" font-size="5.65">选取框</text></g><g fill="#c8c8c8" font-size="5.9"><text x="887.60" y="167.24">不透明度</text></g><g fill="#a0a0a0" font-size="5.8"><text x="944.80" y="167.20">正常</text></g><g fill="#d8d8d8" font-size="5.8"><text x="499.00" y="103.50">新建文档</text></g><g fill="#8c8c8c" font-size="5.6"><text x="247.10" y="140.03">帐户</text><text x="247.10" y="214.13">打开</text><text x="247.10" y="251.33">最近</text><text x="247.10" y="288.73">模板</text><text x="247.10" y="325.43">示例</text></g><g fill="#f4f4f4" font-size="5.7"><text x="247.00" y="177.37">新建</text></g><g fill="#d6d6d6" font-size="5.7"><text x="291.80" y="429.17">启动时显示</text></g><g fill="#f4f4f4" font-size="5.8"><text x="498.90" y="326.50">布局</text></g><g fill="#e8e8e8" font-size="5.8"><text x="539.20" y="326.50">颜色</text><text x="579.80" y="326.50">边距</text></g><g fill="#cacaca" font-size="5.9"><text x="440.26" y="347.44">页面宽度</text><text x="440.26" y="361.04">页面高度</text><text x="553.16" y="347.44">文档单元</text><text x="539.27" y="361.04">实际大小</text><text x="564.96" y="361.04">缩放</text><text x="553.16" y="374.54">图像放置</text></g><g fill="#f0f0f0" font-size="5.75"><text x="584.60" y="347.38">像素</text><text x="584.60" y="360.99">默认值</text><text x="584.60" y="374.23">首选嵌入</text></g><g fill="#d4d4d4" font-size="5.65"><text x="695.80" y="321.75">文档摘要</text></g><g fill="#c2c2c2" font-size="5.3"><text x="695.80" y="354.21">大小</text><text x="695.80" y="378.91">颜色</text><text x="727.30" y="378.91">位</text><text x="695.80" y="391.11">颜色配置文件</text></g><g fill="#f0f0f0" font-size="5.8"><text x="694.20" y="429.10">取消</text><text x="748.40" y="429.10">创建</text></g></svg>
</div></div>
<div style="position:absolute;left:822px;top:-4px;width:65px;height:6.9px;border-radius:3.4px;overflow:hidden;background:#fcfcfc"><div style="width:18px;height:6px;background:#3b82f2"></div></div>
</body></html>
